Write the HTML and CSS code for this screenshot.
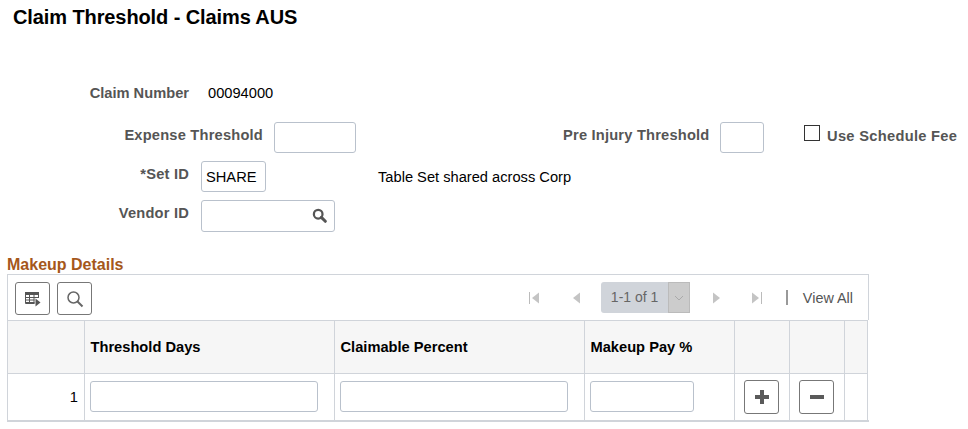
FILE: index.html
```html
<!DOCTYPE html>
<html lang="en">
<head>
  <meta charset="UTF-8">
  <title>Claim Threshold - Claims AUS</title>
  <link rel="stylesheet" href="styles.css">
</head>
<body>
  <h1 class="page-title">Claim Threshold - Claims AUS</h1>

  <div class="form">
    <div class="row row-claim">
      <div class="label label-short label-claim">Claim Number</div>
      <div class="value">00094000</div>
    </div>
    <div class="row row-expense">
      <div class="label label-expense">Expense Threshold</div>
      <input class="field field-expense" type="text">
      <div class="label label-injury">Pre Injury Threshold</div>
      <input class="field field-injury" type="text">
      <label class="check">
        <input class="check-box" type="checkbox">
        <span class="label">Use Schedule Fee</span>
      </label>
    </div>
    <div class="row row-setid">
      <div class="label label-short"><span class="req">*</span>Set ID</div>
      <input class="field field-setid" type="text" value="SHARE">
      <div class="value value-setid">Table Set shared across Corp</div>
    </div>
    <div class="row row-vendor">
      <div class="label label-short">Vendor ID</div>
      <div class="lookup">
        <input class="field field-vendor" type="text">
        <svg class="lookup-icon" width="15" height="15" viewBox="0 0 16 16">
          <circle cx="6.6" cy="6.6" r="4.6" fill="none" stroke="#555" stroke-width="2.4"/>
          <path d="M10 10l4.200 4.200" stroke="#555" stroke-width="3.200" stroke-linecap="round"/>
        </svg>
      </div>
    </div>
  </div>

  <h2 class="section-title">Makeup Details</h2>

  <div class="grid">
    <div class="toolbar">
      <button class="tool-btn" type="button">
        <svg width="18" height="16" viewBox="0 0 18 16">
          <path d="M1 1h14v3H1z" fill="#555"/>
          <path d="M1.500 4v8.500h9M14.500 4v3M1.500 6.500h13M1.500 9h9M1.500 11.500h9M5.500 4v8.500M10 4v8.500" fill="none" stroke="#555"/>
          <path d="M11.500 7.500l5 4-5 4z" fill="#555"/>
        </svg>
      </button>
      <button class="tool-btn" type="button">
        <svg width="18" height="18" viewBox="0 0 18 18">
          <circle cx="7.500" cy="7.500" r="5.500" fill="none" stroke="#666" stroke-width="1.500"/>
          <path d="M11.500 11.500l5 5" stroke="#666" stroke-width="2"/>
        </svg>
      </button>
      <div class="pager">
        <svg class="pager-first" width="14" height="14" viewBox="0 0 14 14">
          <path d="M1.500 1v12" stroke="#bbb"/>
          <path d="M11 1.500v11L4 7z" fill="#c4c4c4"/>
        </svg>
        <svg class="pager-prev" width="10" height="14" viewBox="0 0 10 14">
          <path d="M8 1.500v11L1 7z" fill="#c4c4c4"/>
        </svg>
        <div class="pager-range">
          <span class="pager-text">1-1 of 1</span>
          <span class="pager-caret">
            <svg width="10" height="6" viewBox="0 0 10 6">
              <path d="M1 1l4 4 4-4" fill="none" stroke="#aaa"/>
            </svg>
          </span>
        </div>
        <svg class="pager-next" width="10" height="14" viewBox="0 0 10 14">
          <path d="M2 1.500v11L9 7z" fill="#c4c4c4"/>
        </svg>
        <svg class="pager-last" width="14" height="14" viewBox="0 0 14 14">
          <path d="M2 1.500v11L9 7z" fill="#c4c4c4"/>
          <path d="M11.500 1v12" stroke="#bbb"/>
        </svg>
        <span class="pager-sep"></span>
        <span class="pager-all">View All</span>
      </div>
    </div>

    <table class="grid-table">
      <colgroup>
        <col class="col-num">
        <col class="col-days">
        <col class="col-percent">
        <col class="col-pay">
        <col class="col-action">
        <col class="col-action">
        <col class="col-end">
      </colgroup>
      <thead>
        <tr>
          <th></th>
          <th>Threshold Days</th>
          <th>Claimable Percent</th>
          <th>Makeup Pay %</th>
          <th></th>
          <th></th>
          <th></th>
        </tr>
      </thead>
      <tbody>
        <tr>
          <td class="cell-num">1</td>
          <td><input class="field cell-wide" type="text"></td>
          <td><input class="field cell-wide" type="text"></td>
          <td><input class="field cell-pay" type="text"></td>
          <td>
            <button class="row-btn" type="button">
              <svg width="16" height="16" viewBox="0 0 16 16"><path d="M8 1v14M1 8h14" stroke="#5a5a5a" stroke-width="4"/></svg>
            </button>
          </td>
          <td>
            <button class="row-btn" type="button">
              <svg width="16" height="16" viewBox="0 0 16 16"><path d="M1 8h14" stroke="#5a5a5a" stroke-width="4"/></svg>
            </button>
          </td>
          <td></td>
        </tr>
      </tbody>
    </table>
  </div>
</body>
</html>
```

FILE: styles.css
```css
html, body {
  margin: 0;
  padding: 0;
  background: #fff;
  font-family: "Liberation Sans", Arial, sans-serif;
  font-size: 14.67px;
  color: #000;
}
body {
  width: 968px;
  height: 429px;
  overflow: hidden;
}
.page-title {
  margin: 0;
  padding: 7px 0 0 13px;
  font-size: 20px;
  line-height: 21px;
  letter-spacing: -0.1px;
  font-weight: bold;
}
.form {
  height: 228px;
}
.row {
  display: flex;
  align-items: flex-start;
}
.row-claim {
  padding-top: 57px;
  height: 37px;
}
.row-expense {
  height: 39px;
}
.row-setid {
  height: 39px;
}
.label {
  font-weight: bold;
  color: #555;
  line-height: 16px;
  letter-spacing: 0.2px;
  white-space: nowrap;
}
.label-short {
  width: 189px;
  text-align: right;
}
.label-claim {
  letter-spacing: 0;
}
.value {
  margin-left: 19px;
  line-height: 16px;
}
.value-setid {
  margin-left: 112px;
  padding-top: 8px;
}
.row-setid .label-short,
.row-vendor .label-short {
  padding-top: 5px;
}
.label-expense {
  width: 263px;
  padding-top: 5px;
  text-align: right;
}
.label-injury {
  width: 145px;
  margin-left: 207px;
  padding-top: 5px;
}
.field {
  box-sizing: border-box;
  height: 31px;
  padding: 0 4px;
  border: 1px solid #b9c1cc;
  border-radius: 3px;
  background: #fff;
  font-family: inherit;
  font-size: 14.67px;
  color: #000;
  outline: none;
}
.field-expense {
  width: 82px;
  margin-left: 11px;
}
.field-injury {
  width: 44px;
  margin-left: 12px;
}
.check {
  display: flex;
  align-items: flex-start;
  margin-left: 40px;
  padding-top: 3px;
}
.check-box {
  appearance: none;
  box-sizing: border-box;
  width: 16px;
  height: 16px;
  margin: 0 7px 0 0;
  border: 1px solid #333;
  background: #fff;
}
.check .label {
  padding-top: 3px;
  letter-spacing: 0.3px;
}
.field-setid {
  width: 65px;
  margin-left: 12px;
}
.lookup {
  position: relative;
  margin-left: 12px;
}
.field-vendor {
  display: block;
  width: 134px;
  height: 32px;
}
.lookup-icon {
  position: absolute;
  top: 8px;
  right: 8px;
}
.section-title {
  margin: 0;
  padding: 1px 0 0 7px;
  font-size: 16px;
  line-height: 16px;
  font-weight: bold;
  color: #a5571b;
}
.grid {
  box-sizing: border-box;
  width: 862px;
  margin: 1px 0 0 7px;
  border-bottom: 2px solid #d0d4da;
}
.toolbar {
  box-sizing: border-box;
  display: flex;
  align-items: flex-start;
  gap: 7px;
  height: 46px;
  padding: 7px 0 0 7px;
  border: 1px solid #d0d4da;
  border-bottom: none;
}
.tool-btn,
.row-btn {
  display: flex;
  align-items: center;
  justify-content: center;
  box-sizing: border-box;
  width: 35px;
  height: 33px;
  padding: 0;
  border: 1px solid #777;
  border-radius: 3px;
  background: #fff;
}
.pager {
  display: flex;
  align-items: center;
  height: 31px;
  margin-left: auto;
  padding-right: 15px;
  color: #555;
}
.pager-first {
  margin-right: 30px;
}
.pager-prev {
  margin-right: 19px;
}
.pager-range {
  display: flex;
  align-items: stretch;
  box-sizing: border-box;
  width: 89px;
  height: 31px;
  border-radius: 3px;
  background: #d0d4da;
}
.pager-text {
  flex: 1;
  padding-left: 10px;
  font-size: 14px;
  line-height: 31px;
  color: #666;
}
.pager-caret {
  display: flex;
  align-items: center;
  justify-content: center;
  box-sizing: border-box;
  width: 22px;
  border: 1px solid #bbb;
  background: #ccc;
}
.pager-next {
  margin-left: 21px;
}
.pager-last {
  margin-left: 29px;
}
.pager-sep {
  width: 2px;
  height: 15px;
  margin: 0 15px 0 22px;
  background: #999;
}
.pager-all {
  color: #555;
  font-size: 14.4px;
}
.grid-table {
  width: 860px;
  table-layout: fixed;
  border-collapse: collapse;
  border-left: 1px solid #d0d4da;
  border-right: 1px solid #d0d4da;
}
.col-num { width: 77px; }
.col-days { width: 250px; }
.col-percent { width: 250px; }
.col-pay { width: 150px; }
.col-action { width: 55px; }
.col-end { width: 23px; }
.grid-table th,
.grid-table td {
  box-sizing: border-box;
  padding: 0;
  border: 1px solid #d0d4da;
}
.grid-table th {
  height: 53px;
  padding-left: 5.5px;
  background: #f6f6f6;
  text-align: left;
  font-size: 14.67px;
  font-weight: bold;
  white-space: nowrap;
}
.grid-table td {
  height: 46px;
}
.grid-table th:first-child,
.grid-table td:first-child {
  border-left: none;
}
.grid-table tbody tr td {
  border-bottom: none;
}
.cell-num {
  padding-right: 6px !important;
  text-align: right;
}
.cell-wide {
  display: block;
  width: 228px;
  margin-left: 5px;
}
.cell-pay {
  display: block;
  width: 104px;
  margin-left: 5px;
}
.row-btn {
  margin-left: 9px;
  height: 34px;
}
```
